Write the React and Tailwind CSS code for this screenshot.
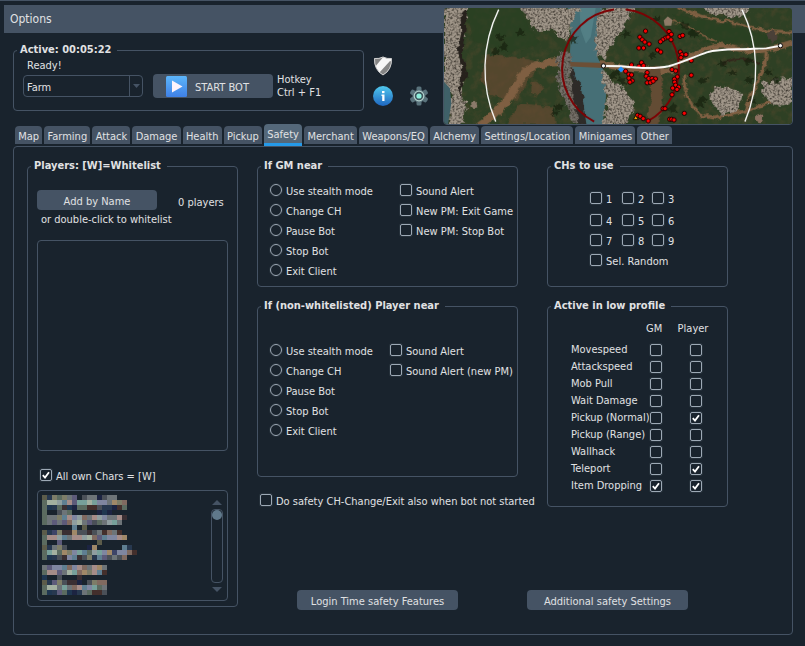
import React from "react";

const TABS = [
  "Map",
  "Farming",
  "Attack",
  "Damage",
  "Health",
  "Pickup",
  "Safety",
  "Merchant",
  "Weapons/EQ",
  "Alchemy",
  "Settings/Location",
  "Minigames",
  "Other",
];

const REACTIONS = ["Use stealth mode", "Change CH", "Pause Bot", "Stop Bot", "Exit Client"];

const LOW_PROFILE = [
  ["Movespeed", false, false],
  ["Attackspeed", false, false],
  ["Mob Pull", false, false],
  ["Wait Damage", false, false],
  ["Pickup (Normal)", false, true],
  ["Pickup (Range)", false, false],
  ["Wallhack", false, false],
  ["Teleport", false, true],
  ["Item Dropping", true, true],
];

function Group({ title, className = "", bodyClass = "", children }) {
  return (
    <fieldset className={`min-w-0 rounded-[4px] border border-[#455364] ${className}`}>
      <legend className="ml-[3px] pr-1.5 pb-0.5 pl-[3px] leading-[15px] font-bold whitespace-nowrap">{title}</legend>
      <div className={bodyClass}>{children}</div>
    </fieldset>
  );
}

function Tick({ id, checked = false, label }) {
  return (
    <span className="grid size-3 shrink-0">
      <input
        id={id}
        type="checkbox"
        defaultChecked={checked}
        aria-label={label}
        className="peer col-start-1 row-start-1 size-3 appearance-none rounded-[2px] border border-[#9da9b5] shadow-[0_0_0_1px_#26313b]"
      />
      <svg
        viewBox="0 0 12 12"
        className="pointer-events-none invisible col-start-1 row-start-1 size-3 peer-checked:visible"
        fill="none"
        stroke="#fff"
        strokeWidth="1.8"
      >
        <path d="M2.800 6.200 L5 8.600 L9 3.200" />
      </svg>
    </span>
  );
}

function CheckRow({ id, label, checked, className = "" }) {
  return (
    <div className={`flex h-5 items-center gap-1 whitespace-nowrap ${className}`}>
      <Tick id={id} checked={checked} />
      <label htmlFor={id} className="pt-[3px]">
        {label}
      </label>
    </div>
  );
}

function Reactions({ name }) {
  return (
    <div>
      {REACTIONS.map((text, i) => (
        <div key={text} className="flex h-5 items-center gap-1 whitespace-nowrap">
          <input
            id={`${name}-${i}`}
            type="radio"
            name={name}
            className="size-3 shrink-0 appearance-none rounded-full border border-[#9da9b5] shadow-[0_0_0_1px_#26313b] checked:bg-[#9da9b5]"
          />
          <label htmlFor={`${name}-${i}`} className="pt-[3px]">
            {text}
          </label>
        </div>
      ))}
    </div>
  );
}

function PanelButton({ className = "", children }) {
  return (
    <button type="button" className={`h-5 rounded-[4px] bg-[#455364] pt-[3px] text-center whitespace-nowrap ${className}`}>
      {children}
    </button>
  );
}

const INK = {
  a: "#5b6b60",
  b: "#3d4468",
  c: "#5d5b7a",
  d: "#7d7d68",
  e: "#3a2f33",
  f: "#806a60",
  g: "#8f9ea0",
  h: "#5f7f92",
  i: "#a3b0a0",
  j: "#1f3650",
  k: "#27384f",
  l: "#6d7478",
  m: "#a58c88",
  n: "#77a09a",
  o: "#5c5c4a",
  p: "#a08868",
  q: "#432f2c",
  r: "#1c2442",
  s: "#7f86a0",
  t: "#4a5058",
};

const CENSORED = [
  "okdadlc.tllrtll.....",
  "aiighmcnninsslpdf...",
  "ajkaejraaqqtkkrqa...",
  "a..tla.....rjr......",
  "alldhmsgflmgsllme...",
  "alclcfgilctalgnl....",
  "......h.o...........",
  "okbdeepttetlqflq....",
  "ammghlmmgifchssmp...",
  "a..c.......o........",
  "okldt....rp.....hk..",
  "aniapdsnhagnspbssfq.",
  "ajkteshetdkhctltf...",
  "....................",
  "lcsshfsmflmpl.......",
  "ammclinfpdmhq.......",
  "j..t...e............",
  "okcdteer.tdff.......",
  "aiilnlfmhsnal.......",
  "ajkcajrklaqqt.......",
];

function CharacterList() {
  return (
    <div className="flex h-[111px] justify-between rounded-[4px] border border-[#455364] p-1">
      <svg width="100" height="100" viewBox="0 0 100 100" shapeRendering="crispEdges" aria-label="Characters">
        {CENSORED.flatMap((row, y) =>
          [...row].map((key, x) =>
            INK[key] ? <rect key={`${x}-${y}`} x={x * 5} y={y * 5} width="5" height="5" fill={INK[key]} /> : null
          )
        )}
      </svg>
      <div className="flex w-3 flex-col items-center justify-between pt-[5px] pb-1">
        <svg width="10" height="5" viewBox="0 0 10 5" fill="#455364">
          <path d="M5 0 L10 5 H0 Z" />
        </svg>
        <div className="my-1 w-3 flex-1 rounded-[4px] border border-[#455364]">
          <div className="size-[10px] rounded-full bg-[#60798b]" />
        </div>
        <svg width="10" height="5" viewBox="0 0 10 5" fill="#455364">
          <path d="M0 0 H10 L5 5 Z" />
        </svg>
      </div>
    </div>
  );
}

const MOBS = [
  [620, 92], [603, 110], [610, 118], [618, 125], [631, 131], [600, 143], [614, 143], [656, 149], [666, 155],
  [691, 93], [698, 102], [680, 113], [672, 118], [665, 124], [688, 110], [697, 118], [724, 108], [732, 105],
  [725, 155], [730, 163], [727, 172], [742, 163], [758, 181], [758, 225], [578, 194], [608, 187], [600, 198],
  [614, 196], [625, 217], [560, 213], [570, 222], [578, 224], [570, 234], [580, 242], [573, 246], [622, 228],
  [630, 235], [640, 235], [650, 236], [625, 248], [635, 247], [643, 243], [700, 208], [711, 212], [716, 230],
  [707, 237], [708, 246], [711, 255], [702, 264], [720, 261], [715, 268], [700, 284], [673, 326], [679, 326],
  [737, 340], [693, 358], [699, 358], [706, 360], [596, 346], [604, 349], [613, 356], [628, 363],
];

const TREES = [
  [180, 110], [190, 140], [165, 155], [240, 95], [355, 320], [345, 340], [400, 115], [760, 97], [770, 100],
  [735, 75], [650, 55], [790, 240], [790, 300], [780, 310], [880, 215], [930, 180], [940, 300], [990, 215],
  [520, 225], [545, 240], [530, 215], [640, 165], [700, 325], [930, 240], [850, 190], [1010, 240], [560, 100],
];

function WorldMap() {
  return (
    <svg
      viewBox="12 20 1050 355"
      preserveAspectRatio="xMidYMid slice"
      className="block h-[118px] w-[350px] rounded-[4px] border border-[#455364]"
      role="img"
      aria-label="World map"
    >
      <defs>
        <filter id="rock" x="-5%" y="-5%" width="110%" height="110%" colorInterpolationFilters="sRGB">
          <feTurbulence type="fractalNoise" baseFrequency="0.05" numOctaves="3" seed="2" result="w" />
          <feDisplacementMap in="SourceGraphic" in2="w" scale="30" xChannelSelector="R" yChannelSelector="G" result="s" />
          <feTurbulence type="fractalNoise" baseFrequency="0.16" numOctaves="3" seed="4" result="n" />
          <feColorMatrix in="n" values="0 0 0 0 0.24  0 0 0 0 0.22  0 0 0 0 0.19  2.4 0 0 0 -1.0" result="d" />
          <feComposite in="d" in2="s" operator="in" result="dd" />
          <feMerge>
            <feMergeNode in="s" />
            <feMergeNode in="dd" />
          </feMerge>
        </filter>
        <filter id="grass" x="0" y="0" width="100%" height="100%" colorInterpolationFilters="sRGB">
          <feTurbulence type="fractalNoise" baseFrequency="0.04" numOctaves="4" seed="9" result="n" />
          <feColorMatrix in="n" values="0 0 0 0 0.27  0 0 0 0 0.27  0 0 0 0 0.16  2.2 0 0 0 -1" result="d" />
          <feMerge>
            <feMergeNode in="SourceGraphic" />
            <feMergeNode in="d" />
          </feMerge>
        </filter>
        <filter id="rough" x="-5%" y="-5%" width="110%" height="110%" colorInterpolationFilters="sRGB">
          <feTurbulence type="fractalNoise" baseFrequency="0.05" numOctaves="3" seed="7" result="w" />
          <feDisplacementMap in="SourceGraphic" in2="w" scale="18" xChannelSelector="R" yChannelSelector="G" />
        </filter>
      </defs>
      <rect x="0" y="0" width="1080" height="400" fill="#2e4024" filter="url(#grass)" />

      <g filter="url(#rough)">
        <path d="M80 20 H240 L270 80 L300 130 L200 160 L100 120 Z" fill="#2a4022" opacity="0.7" />
        <path d="M700 40 L850 70 L1000 110 L980 135 L820 130 L720 90 Z" fill="#284021" opacity="0.7" />
        <g fill="#664a32" opacity="0.7">
          <path d="M140 165 L230 170 L300 185 L270 240 L230 300 L160 290 L120 240 Z" />
          <path d="M240 310 L340 320 L350 375 L200 375 Z" />
          <path d="M275 250 q25 -15 35 15 q-10 30 -35 20 Z" />
        </g>
        <g fill="none" stroke="#7f5f42" strokeLinecap="round">
          <path d="M110 385 C190 330 215 290 235 245 C255 205 290 188 350 187" strokeWidth="24" />
          <path d="M350 187 L490 193 L560 205 L700 212" strokeWidth="19" />
          <path d="M650 215 L655 290 L640 375" strokeWidth="36" stroke="#634c34" />
          <path d="M700 205 C760 160 830 120 890 145 C950 160 1000 150 1062 128" strokeWidth="14" />
          <path d="M720 20 C800 60 850 55 920 75 C980 95 1020 100 1062 95" strokeWidth="9" />
          <path d="M985 150 C985 220 940 260 920 340" strokeWidth="10" />
          <path d="M735 230 C740 310 770 350 830 355 C880 335 920 340 960 320 L1062 280" strokeWidth="9" />
          <path d="M690 60 C740 70 790 100 830 125" strokeWidth="5" />
          <path d="M855 190 C900 165 940 180 960 190" strokeWidth="8" stroke="#33281c" />
        </g>
      </g>

      <path d="M385 20 H490 L485 90 L475 170 L505 235 L500 300 L490 375 H425 L415 280 L390 190 L395 100 Z" fill="#466f76" />
      <path d="M420 20 H470 L455 110 L440 130 L425 90 Z" fill="#5b8a90" opacity="0.6" />

      <g fill="#a1978a" filter="url(#rock)">
        <path d="M12 20 H80 L72 90 L60 150 L75 210 L60 260 L80 310 L60 375 H22 L35 290 L12 240 Z" />
        <path d="M245 20 H420 L400 70 L385 130 L375 115 L330 90 L290 95 L265 55 Z" />
        <path d="M355 165 L385 150 L400 190 L395 240 L425 300 L435 375 H400 L380 310 L358 260 Z" fill="#76716a" />
        <path d="M470 90 L485 20 H590 L560 70 L530 120 L505 150 L500 180 L470 170 Z" />
        <path d="M490 205 L520 245 L560 265 L585 310 L570 375 H485 L505 320 Z" />
        <path d="M780 10 H940 L930 40 L880 50 L820 42 Z" />
        <path d="M820 265 L860 260 L910 280 L900 330 L850 345 L815 310 Z" />
        <path d="M975 245 L1062 235 V310 L1010 320 L975 290 Z" />
      </g>
      <path d="M12 245 L30 265 L34 310 L24 375 H12 Z" fill="#3f6068" />
      <g filter="url(#rough)">
        <path d="M62 40 L82 30 L76 100 L66 160 L82 220 L64 270 L72 310 L56 270 L66 210 L54 150 L64 95 Z" fill="#26211c" />
        <path d="M395 200 L425 260 L442 375 H420 L400 290 Z" fill="#2e2b28" />
      </g>
      <path d="M392 185 L495 188 L492 203 L394 199 Z" fill="#6c4f36" />

      <g fill="#17210f" opacity="0.7" filter="url(#rough)">
        {TREES.map(([x, y], i) => (
          <path key={i} d={`M${x} ${y - 13} l5 8 l11 -2 l-6 9 l5 10 l-11 -4 l-7 6 l-2 -9 l-9 -3 l9 -5 Z`} />
        ))}
      </g>
      <path d="M675 60 l12 -12 l14 10 l-3 18 l-20 0 Z" fill="#8f7b68" />
      <g filter="url(#rough)">
        <circle cx="1003" cy="108" r="15" fill="#4a4038" />
        <circle cx="963" cy="355" r="12" fill="#8a7060" />
        <circle cx="103" cy="315" r="9" fill="#8a7a6a" />
      </g>

      <path d="M465 365 A180 180 0 0 1 525 27 M560 27 A180 180 0 0 1 625 365" fill="none" stroke="#7d0204" strokeWidth="6" />
      <path d="M177 27 A407 407 0 0 0 168 365 M911 27 A407 407 0 0 1 920 365" fill="none" stroke="#fff" strokeWidth="4" />
      <g fill="#fe0000" stroke="#1a0000" strokeWidth="3">
        {MOBS.map(([x, y], i) => (
          <circle key={i} cx={x} cy={y} r="6.5" />
        ))}
      </g>
      <path
        d="M493 197 L545 198 C590 203 650 207 690 198 C740 183 770 168 805 156 C850 143 900 149 945 145 L985 144 L1027 136"
        fill="none"
        stroke="#fff"
        strokeWidth="6"
      />
      <path d="M546 199 L555 208 L546 217 L537 208 Z" fill="#1e90ff" />
      <path d="M583 359 L590 347 L599 359 Z" fill="#ffa500" stroke="#1a0f00" strokeWidth="3" />
      <circle cx="493" cy="197" r="6.5" fill="#fff" stroke="#000" strokeWidth="3" />
      <circle cx="1027" cy="136" r="6.5" fill="#fff" stroke="#000" strokeWidth="3" />
    </svg>
  );
}

function ShieldIcon() {
  return (
    <svg width="20" height="20" viewBox="0 0 20 20">
      <defs>
        <clipPath id="shield">
          <path d="M1.500 2.500 Q6 3 10 1 Q14 3 18.500 2.500 Q19 14 10 19 Q1 14 1.500 2.500 Z" />
        </clipPath>
      </defs>
      <g clipPath="url(#shield)">
        <rect width="20" height="20" fill="#f6f6f6" />
        <path d="M0 0 H11 L2 11 L0 10 Z" fill="#858585" />
        <path d="M20 6 V15 L10 20 L6 17 L17 5 Z" fill="#858585" />
      </g>
      <path
        d="M1.500 2.500 Q6 3 10 1 Q14 3 18.500 2.500 Q19 14 10 19 Q1 14 1.500 2.500 Z"
        fill="none"
        stroke="#cfcfcf"
        strokeWidth="1"
      />
    </svg>
  );
}

function InfoIcon() {
  return (
    <svg width="20" height="20" viewBox="0 0 20 20">
      <defs>
        <linearGradient id="info" x1="0" y1="0" x2="0" y2="1">
          <stop offset="0" stopColor="#50c8ee" />
          <stop offset="1" stopColor="#1e66c0" />
        </linearGradient>
      </defs>
      <circle cx="10" cy="10" r="10" fill="url(#info)" />
      <rect x="9" y="5" width="2.500" height="2.200" fill="#fff" />
      <path d="M8.500 8.500 H11.500 V15 H9.200 V10 H8.500 Z" fill="#fff" />
    </svg>
  );
}

function GearIcon() {
  return (
    <svg width="20" height="20" viewBox="0 0 20 20">
      <g fill="#5a737c">
        {[0, 60, 120].map((a) => (
          <rect key={a} x="7.500" y="0.500" width="5" height="19" rx="1.500" transform={`rotate(${a} 10 10)`} />
        ))}
        <circle cx="10" cy="10" r="6.500" />
      </g>
      <circle cx="10" cy="10" r="4.800" fill="#3a555c" stroke="#b4d0cc" strokeWidth="1.200" />
      <circle cx="10" cy="10" r="2.600" fill="#8ff0dc" />
    </svg>
  );
}

function StartIcon() {
  return (
    <svg width="21" height="21" viewBox="0 0 21 21">
      <defs>
        <linearGradient id="start" x1="0" y1="0" x2="0" y2="1">
          <stop offset="0" stopColor="#5cb6fb" />
          <stop offset="1" stopColor="#3f80e6" />
        </linearGradient>
      </defs>
      <rect width="21" height="21" rx="1.500" fill="url(#start)" />
      <path d="M6 4.500 L16.500 10.500 L6 16.500 Z" fill="#fdf3fb" />
    </svg>
  );
}

function Header() {
  return (
    <header className="relative pt-1">
      <h1 className="ml-1 h-7 bg-[#455364] pl-1.5 text-[12px] leading-7 font-normal">Options</h1>
      <div className="flex pt-[9px] pl-[13px]">
        <Group title="Active: 00:05:22" className="w-[351px]" bodyClass="pr-2 pb-[11px] pl-[9px]">
          <p className="pl-1 leading-[14px]">Ready!</p>
          <div className="flex items-center">
            <div className="grid h-[22px] w-[120px]">
              <select
                aria-label="Bot mode"
                className="col-start-1 row-start-1 appearance-none rounded-[4px] border border-[#455364] bg-transparent pt-[3px] pl-[3px]"
              >
                <option>Farm</option>
              </select>
              <span className="pointer-events-none col-start-1 row-start-1 grid w-[14px] place-items-center justify-self-end border-l border-[#455364]">
                <svg width="7" height="4" viewBox="0 0 7 4" fill="#455364">
                  <path d="M0 0 H7 L3.500 4 Z" />
                </svg>
              </span>
            </div>
            <button
              type="button"
              className="ml-2.5 flex h-6 w-[120px] items-center gap-2 rounded-[4px] bg-[#455364] pl-[13px] whitespace-nowrap"
            >
              <StartIcon />
              <span className="pt-[3px]">START BOT</span>
            </button>
            <p className="ml-1 leading-[13px] whitespace-nowrap">
              Hotkey
              <br />
              Ctrl + F1
            </p>
          </div>
        </Group>
        <div className="ml-[9px] grid grid-cols-[20px_20px] content-start gap-x-4 gap-y-2.5 pt-[14px]">
          <button type="button" aria-label="Protection" className="col-span-2 w-5">
            <ShieldIcon />
          </button>
          <button type="button" aria-label="Information">
            <InfoIcon />
          </button>
          <button type="button" aria-label="Settings">
            <GearIcon />
          </button>
        </div>
      </div>
      <div className="absolute top-1.5 right-3">
        <WorldMap />
      </div>
    </header>
  );
}

export default function App() {
  return (
    <div className="min-h-screen border-t border-[#455364] bg-[#19232d] pb-[11px] font-['DejaVu_Sans_Condensed','DejaVu_Sans',sans-serif] text-[11px] leading-[14px] text-[#e0e1e3]">
      <Header />
      <nav role="tablist" className="ml-[15px] flex w-[657px] items-end gap-0.5 pt-[13px]">
        {TABS.map((tab) => (
          <button
            key={tab}
            type="button"
            role="tab"
            aria-selected={tab === "Safety"}
            className={
              tab === "Safety"
                ? "h-[22px] grow rounded-t-[4px] border-b-3 border-[#259ae9] bg-[#54687a] px-[3px] pt-0.5 whitespace-nowrap"
                : "mb-0.5 h-[18px] grow rounded-t-[4px] bg-[#455364] px-[3px] pt-[3px] whitespace-nowrap"
            }
          >
            {tab}
          </button>
        ))}
      </nav>

      <main className="mr-3 ml-[13px] grid grid-cols-[minmax(0,211fr)_minmax(0,471fr)] items-start gap-[19px] rounded-[4px] border border-[#455364] pt-[11px] pr-16 pb-6 pl-[13px]">
        <Group title="Players: [W]=Whitelist" bodyClass="px-[9px] pb-[5px]">
          <div className="flex h-[38px] gap-[21px] pt-[15px]">
            <PanelButton className="w-[120px]">Add by Name</PanelButton>
            <span className="leading-[26px] whitespace-nowrap">0 players</span>
          </div>
          <p className="pl-1 whitespace-nowrap">or double-click to whitelist</p>
          <div className="mt-[13px] h-[211px] rounded-[4px] border border-[#455364]" />
          <CheckRow id="own" label="All own Chars = [W]" checked className="mt-[14px] mb-[5px] pl-[3px]" />
          <CharacterList />
        </Group>

        <div>
          <div className="grid grid-cols-[minmax(0,261fr)_minmax(0,181fr)] gap-x-[29px] gap-y-[11px]">
            <Group title="If GM near" bodyClass="pb-1.5 pl-3">
              <div className="flex pt-[5px]">
                <div className="w-[130px]">
                  <Reactions name="gm" />
                </div>
                <div>
                  <CheckRow id="gm-sound" label="Sound Alert" />
                  <CheckRow id="gm-exit" label="New PM: Exit Game" />
                  <CheckRow id="gm-stop" label="New PM: Stop Bot" />
                </div>
              </div>
            </Group>

            <Group title="CHs to use" bodyClass="pb-4 pl-[42px]">
              <div className="grid grid-cols-[32px_30px_30px] pt-[13px]">
                {[1, 2, 3, 4, 5, 6, 7, 8, 9].map((n) => (
                  <CheckRow key={n} id={`ch-${n}`} label={n} className={n < 4 ? "mb-0.5" : ""} />
                ))}
                <CheckRow id="ch-random" label="Sel. Random" className="col-span-3" />
              </div>
            </Group>

            <div>
              <Group title="If (non-whitelisted) Player near" bodyClass="pb-9 pl-3">
                <div className="flex pt-[25px]">
                  <div className="w-[120px]">
                    <Reactions name="player" />
                  </div>
                  <div>
                    <CheckRow id="pl-sound" label="Sound Alert" />
                    <CheckRow id="pl-pm" label="Sound Alert (new PM)" />
                  </div>
                </div>
              </Group>
              <CheckRow
                id="always"
                label="Do safety CH-Change/Exit also when bot not started"
                className="mt-[13px] pl-[3px]"
              />
            </div>

            <Group title="Active in low profile" className="self-start" bodyClass="pt-[7px] pb-3 pl-[23px]">
              <table className="w-[147px] table-fixed border-collapse">
                <colgroup>
                  <col className="w-[75px]" />
                  <col className="w-[28px]" />
                  <col className="w-[44px]" />
                </colgroup>
                <thead>
                  <tr className="h-[19px] align-top">
                    <th aria-label="Feature" className="p-0" />
                    <th className="p-0 text-left font-normal">GM</th>
                    <th className="p-0 pr-1.5 text-center font-normal">Player</th>
                  </tr>
                </thead>
                <tbody>
                  {LOW_PROFILE.map(([name, gm, player]) => (
                    <tr key={name} className="h-[17px]">
                      <th scope="row" className="p-0 text-left font-normal whitespace-nowrap">
                        {name}
                      </th>
                      <td className="p-0 pl-1">
                        <Tick checked={gm} label={`${name}, GM`} />
                      </td>
                      <td className="p-0 pl-4">
                        <Tick checked={player} label={`${name}, Player`} />
                      </td>
                    </tr>
                  ))}
                </tbody>
              </table>
            </Group>
          </div>
          <div className="mt-20 flex gap-[69px] pl-10">
            <PanelButton className="w-[161px]">Login Time safety Features</PanelButton>
            <PanelButton className="w-[161px]">Additional safety Settings</PanelButton>
          </div>
        </div>
      </main>
    </div>
  );
}
